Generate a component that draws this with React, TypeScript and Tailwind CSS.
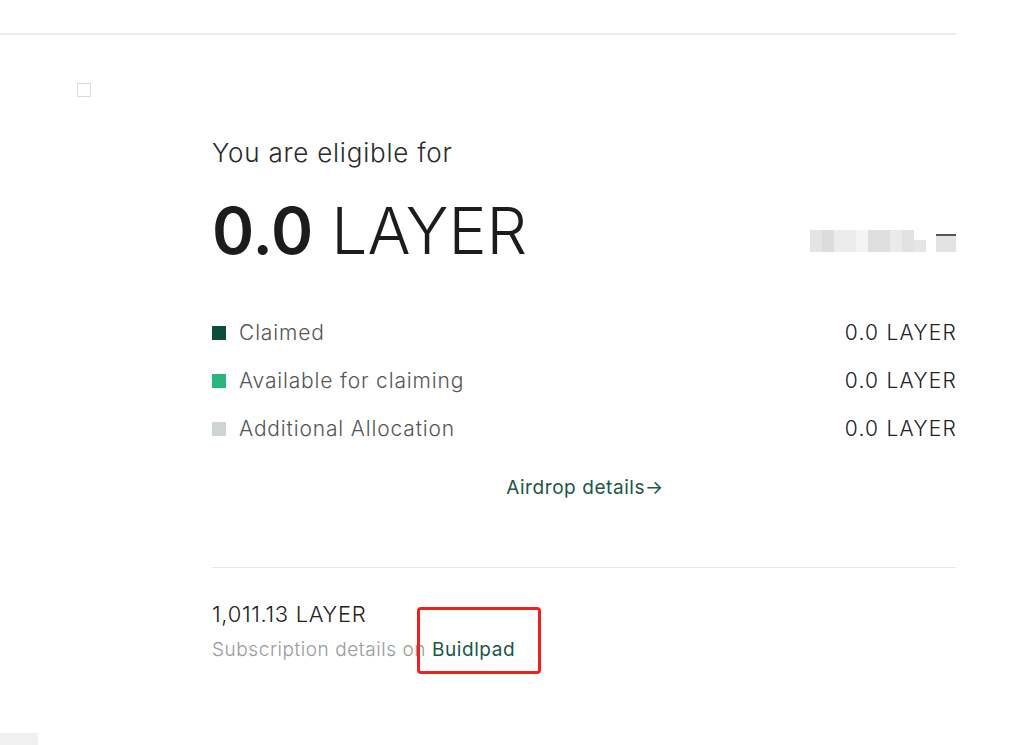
import React from "react";

const rows = [
  { label: "Claimed", color: "bg-[#0e4d3c]", value: "0.0 LAYER" },
  { label: "Available for claiming", color: "bg-[#2ab57d]", value: "0.0 LAYER" },
  { label: "Additional Allocation", color: "bg-[#cdd6d4]", value: "0.0 LAYER" },
];

export default function App() {
  return (
    <div className="relative w-[1030px] h-[745px] bg-white overflow-hidden font-['Inter',sans-serif] text-[#222]">
      {/* top divider */}
      <div className="pt-[33px]">
        <div className="w-[956px] h-[2px] bg-[#ebebeb]" />
      </div>

      {/* small checkbox */}
      <div className="pl-[77px] pt-[48px]">
        <div className="w-[14px] h-[14px] border border-[#dcdcdc]" />
      </div>

      <div className="ml-[212px] w-[744px]">
        <div className="mt-[38px] text-[26px] leading-[36px] font-light tracking-[0.03em] text-[#2a2a2a]">You are eligible for</div>

        <div className="mt-[20px] flex items-center justify-between">
          <div className="text-[64px] leading-[80px] text-[#1c1c1c]">
            <span className="font-semibold">0.0</span> <span className="font-light">LAYER</span>
          </div>
          {/* blurred address */}
          <div className="flex items-end gap-[10px] mt-[20px]">
            <div className="flex">
              <div className="w-[12px] h-[22px] bg-[#e4e4e4]" />
              <div className="w-[12px] h-[22px] bg-[#dcdcdc]" />
              <div className="w-[22px] h-[22px] bg-[#ececec]" />
              <div className="w-[12px] h-[22px] bg-[#f3f3f3]" />
              <div className="w-[22px] h-[22px] bg-[#dedede]" />
              <div className="w-[12px] h-[22px] bg-[#eaeaea]" />
              <div className="w-[12px] h-[22px] bg-[#e2e2e2]" />
              <div className="w-[12px] h-[12px] self-end bg-[#e6e6e6]" />
            </div>
            <div className="w-[20px] h-[18px] bg-[#e3e3e3] border-t-2 border-[#555]" />
          </div>
        </div>

        <div className="mt-[50px] flex flex-col gap-[24px]">
          {rows.map((r) => (
            <div key={r.label} className="flex items-center justify-between h-[24px]">
              <div className="flex items-center gap-[13px]">
                <div className={`w-[14px] h-[14px] ${r.color}`} />
                <span className="text-[21px] font-light tracking-[0.04em] text-[#555]">{r.label}</span>
              </div>
              <span className="text-[21px] font-light tracking-[0.06em] -mr-[1px] text-[#222]">{r.value}</span>
            </div>
          ))}
        </div>

        <div className="mt-[35px] flex justify-center">
          <span className="text-[19px] leading-[24px] tracking-[0.03em] text-[#1b5646] pl-[2px]">Airdrop details→</span>
        </div>

        <div className="mt-[67px] h-px bg-[#e6e6e6]" />

        <div className="mt-[32px] text-[22px] leading-[28px] font-light tracking-[0.03em] text-[#222]">1,011.13 LAYER</div>
        <div className="mt-[9px] text-[19px] leading-[26px] font-light tracking-[0.03em] text-[#999]">
          Subscription details on <span className="font-normal text-[#1b5646]">Buidlpad</span>
        </div>
      </div>

      {/* annotation box */}
      <div className="absolute left-[417px] top-[607px] w-[124px] h-[67px] border-[3px] border-[#f02020] rounded-[4px]" />

      {/* bottom-left block */}
      <div className="absolute left-0 top-[733px] w-[38px] h-[12px] bg-[#f0f0f0]" />
    </div>
  );
}
